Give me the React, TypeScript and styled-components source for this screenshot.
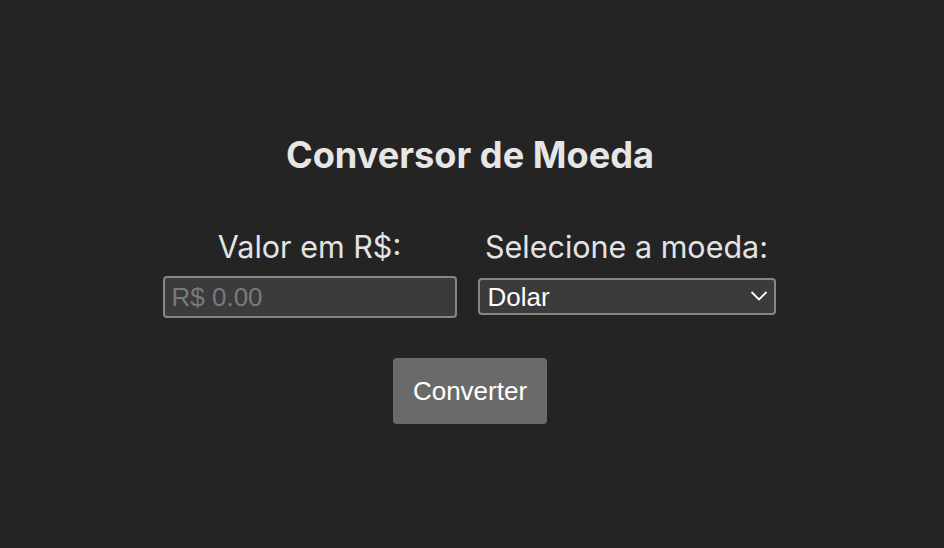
import React from "react";
import styled, { createGlobalStyle } from "styled-components";

const Global = createGlobalStyle`
  html, body { margin: 0; padding: 0; background: #242424; }
  body { font-family: Inter, "Liberation Sans", sans-serif; color: rgba(255,255,255,0.87); }
`;

const Page = styled.div`
  min-height: 548px;
  box-sizing: border-box;
  display: flex;
  flex-direction: column;
  align-items: center;
  padding: 133px 4px 0 0;
`;

const Title = styled.h1`
  margin: 0 0 51px;
  font-family: Inter, sans-serif;
  font-weight: 700;
  font-size: 36.2px;
  line-height: 44px;
  color: #e6e6e6;
`;

const Row = styled.div`
  display: flex;
  gap: 21px;
  align-items: flex-start;
  margin-right: 2px;
`;

const Field = styled.div<{ $w: number }>`
  width: ${(p) => p.$w}px;
  display: flex;
  flex-direction: column;
  align-items: center;
  gap: 11px;
`;

const Label = styled.label`
  font-family: Inter, sans-serif;
  font-size: 30.5px;
  line-height: 37px;
  color: #e3e3e3;
  white-space: nowrap;
`;

const Input = styled.input`
  box-sizing: border-box;
  width: 100%;
  height: 42px;
  margin: 0;
  padding: 0 7px;
  background: #3b3b3b;
  border: 2px solid #868686;
  border-radius: 4px;
  font-family: "Liberation Sans", Arial, sans-serif;
  font-size: 26px;
  color: #e6e6e6;
  outline: none;
  &::placeholder { color: #7a7a7a; }
`;

const SelectWrap = styled.div`
  position: relative;
  width: 100%;
  margin-top: 2px;
`;

const Select = styled.select`
  box-sizing: border-box;
  width: 100%;
  height: 37px;
  margin: 0;
  padding: 0 30px 0 8px;
  appearance: none;
  background: #3b3b3b;
  border: 2px solid #868686;
  border-radius: 4px;
  font-family: "Liberation Sans", Arial, sans-serif;
  font-size: 26px;
  color: #ffffff;
  outline: none;
`;

const Chevron = styled.svg`
  position: absolute;
  right: 8px;
  top: 12px;
  pointer-events: none;
`;

const Button = styled.button`
  margin-top: 40px;
  width: 154px;
  height: 66px;
  padding: 0;
  border: none;
  border-radius: 4px;
  background: #6a6a6a;
  color: #ffffff;
  font-family: "Liberation Sans", Arial, sans-serif;
  font-size: 26px;
  cursor: pointer;
`;

export default function App() {
  return (
    <>
      <Global />
      <Page>
        <Title>Conversor de Moeda</Title>
        <Row>
          <Field $w={294}>
            <Label>Valor em R$:</Label>
            <Input placeholder="R$ 0.00" />
          </Field>
          <Field $w={298}>
            <Label>Selecione a moeda:</Label>
            <SelectWrap>
              <Select defaultValue="USD">
                <option value="USD">Dolar</option>
                <option value="EUR">Euro</option>
              </Select>
              <Chevron width="18" height="12" viewBox="0 0 18 12">
                <path d="M1.5 2 L9 9.5 L16.5 2" fill="none" stroke="#ffffff" strokeWidth="1.8" />
              </Chevron>
            </SelectWrap>
          </Field>
        </Row>
        <Button>Converter</Button>
      </Page>
    </>
  );
}
